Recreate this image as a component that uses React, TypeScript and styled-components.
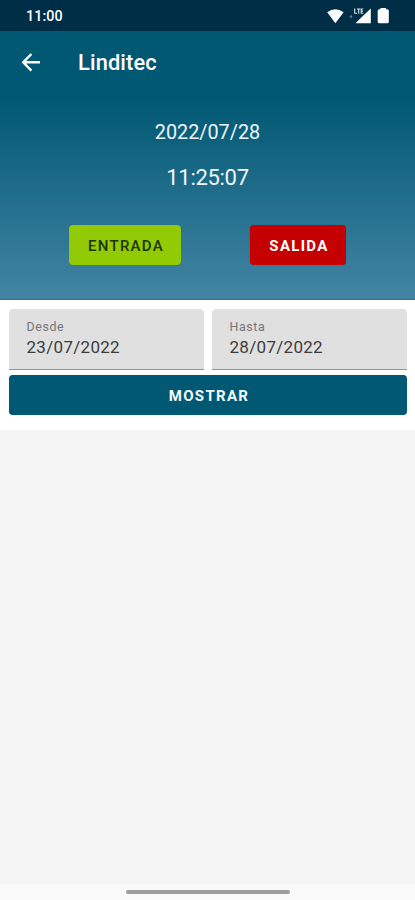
import React from "react";
import styled, { createGlobalStyle } from "styled-components";

const GlobalStyle = createGlobalStyle`
  * { box-sizing: border-box; }
  body { margin: 0; background: #f5f5f5; font-family: Roboto, "Noto Sans", sans-serif; }
`;

const Screen = styled.main`
  display: flex;
  flex-direction: column;
  width: 415px;
  height: 900px;
  overflow: hidden;
  background: #f5f5f5;
`;

const StatusBar = styled.div`
  display: flex;
  align-items: center;
  justify-content: space-between;
  flex: none;
  height: 31px;
  padding: 0 26px;
  background: #002e46;
  color: #fff;
`;

const Clock = styled.span`
  font-size: 14.3px;
  font-weight: 500;
  line-height: 31px;
  padding-top: 1px;
  letter-spacing: 0.1px;
`;

const StatusIcons = styled.svg`
  display: block;
  width: 64px;
  height: 31px;
`;

const Header = styled.header`
  flex: none;
  height: 268.5px;
  background: linear-gradient(#005873 0, #005873 68px, #4384a4 100%);
  border-bottom: 1px solid #2f7492;
  color: #fff;
`;

const AppBar = styled.div`
  display: flex;
  align-items: center;
  height: 61px;
  padding-left: 19px;
`;

const BackButton = styled.button`
  display: flex;
  width: 24px;
  height: 24px;
  padding: 0;
  border: 0;
  background: none;
  color: #fff;
`;

const Title = styled.h1`
  margin: 3px 0 0 35px;
  font-size: 21.8px;
  font-weight: 500;
  line-height: 28px;
  letter-spacing: 0.15px;
`;

const Moment = styled.div<{ $size: number; $top: number; $spacing: number }>`
  height: 28px;
  margin-top: ${(p) => p.$top}px;
  font-size: ${(p) => p.$size}px;
  line-height: 28px;
  letter-spacing: ${(p) => p.$spacing}px;
  text-align: center;
  color: #eef6fb;
`;

const Actions = styled.div`
  display: flex;
  justify-content: space-between;
  margin: 33px 69px 0;
`;

const Button = styled.button<{ $width: string; $bg: string; $color: string; $weight?: number }>`
  width: ${(p) => p.$width};
  height: 40px;
  padding: 1px 0 0 2px;
  border: 0;
  border-radius: 4px;
  background: ${(p) => p.$bg};
  color: ${(p) => p.$color};
  box-shadow: 0 0 1px rgba(0, 35, 55, 0.3);
  font-family: inherit;
  font-size: 15px;
  font-weight: ${(p) => p.$weight ?? 700};
  letter-spacing: 1.3px;
`;

const Filters = styled.section`
  flex: none;
  height: 130.5px;
  padding: 9px 8px 0 9px;
  background: #fff;
`;

const Fields = styled.div`
  display: grid;
  grid-template-columns: 195px 195px;
  column-gap: 8px;
  margin-bottom: 5.5px;
`;

const Field = styled.label`
  display: flex;
  flex-direction: column;
  height: 61px;
  padding: 10.5px 17.5px 0;
  border-bottom: 1px solid #949494;
  border-radius: 4px 4px 0 0;
  background: #e0e0e0;
`;

const FieldLabel = styled.span`
  font-size: 12.4px;
  line-height: 16px;
  letter-spacing: 0.6px;
  color: #777;
`;

const FieldValue = styled.span`
  font-size: 17px;
  line-height: 24px;
  letter-spacing: 0.3px;
  color: #3c3c3c;
`;

const Results = styled.section`
  flex: 1;
  background: #f5f5f5;
`;

const NavigationBar = styled.div`
  display: flex;
  justify-content: center;
  flex: none;
  height: 16px;
  padding-top: 6px;
  background: #fafafa;
`;

const Handle = styled.div`
  width: 164px;
  height: 4px;
  border-radius: 2px;
  background: #9c9c9c;
`;

export default function App() {
  return (
    <>
      <GlobalStyle />
      <Screen>
        <StatusBar>
          <Clock>11:00</Clock>
          <StatusIcons viewBox="325 0 64 31" fill="#fff">
            <path d="M327.2 12.2 Q335.3 6.2 343.6 12.2 L335.4 23.3 Z" />
            <path d="M370.8 8.6 V23.3 H355.6 L360.5 18.3 L363.4 15.6 Z" />
            <g fill="none" stroke="#d5e3ed" strokeWidth="1.1">
              <path d="M354.7 8.5 V13.3 H357 M357 9 H360.3 M358.7 9 V13.8 M363.2 9 H361.2 V13.3 H363.2 M361.2 11.1 H363" />
            </g>
            <path d="M349.4 16.8 L351 14.8 L352.6 16.8 L351 18.5 Z" opacity="0.35" />
            <path d="M380.4 8 H386 V9.3 H387.3 Q388.8 9.3 388.8 10.8 V21.8 Q388.8 23.3 387.3 23.3 H379.2 Q377.7 23.3 377.7 21.8 V10.8 Q377.7 9.3 379.2 9.3 H380.4 Z" />
          </StatusIcons>
        </StatusBar>
        <Header>
          <AppBar>
            <BackButton aria-label="Atrás">
              <svg width="24" height="24" viewBox="0 0 24 24" fill="none" stroke="currentColor" strokeWidth="2.4">
                <path d="M21 12.3 H4.8 M12.4 4 L4.2 12.3 L12.4 20.6" />
              </svg>
            </BackButton>
            <Title>Linditec</Title>
          </AppBar>
          <Moment $size={19.8} $top={27} $spacing={0}>2022/07/28</Moment>
          <Moment $size={22} $top={17} $spacing={-0.3}>11:25:07</Moment>
          <Actions>
            <Button $width="112px" $bg="#92ca05" $color="#1f3300" $weight={500}>ENTRADA</Button>
            <Button $width="96px" $bg="#c50000" $color="#fff">SALIDA</Button>
          </Actions>
        </Header>
        <Filters>
          <Fields>
            <Field>
              <FieldLabel>Desde</FieldLabel>
              <FieldValue>23/07/2022</FieldValue>
            </Field>
            <Field>
              <FieldLabel>Hasta</FieldLabel>
              <FieldValue>28/07/2022</FieldValue>
            </Field>
          </Fields>
          <Button $width="100%" $bg="#005873" $color="#f4f9fb">MOSTRAR</Button>
        </Filters>
        <Results />
        <NavigationBar>
          <Handle />
        </NavigationBar>
      </Screen>
    </>
  );
}
